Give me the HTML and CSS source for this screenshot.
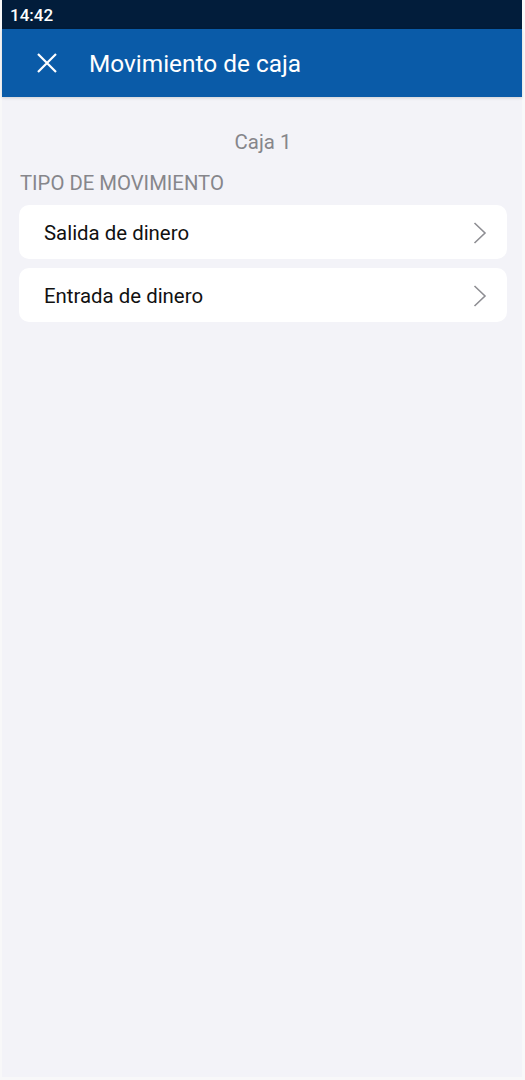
FILE: index.html
```html
<!DOCTYPE html>
<html lang="es">
<head>
  <meta charset="UTF-8">
  <title>Movimiento de caja</title>
  <link rel="stylesheet" href="styles.css">
</head>
<body>
  <div class="pantalla">
    <div class="status-bar">14:42</div>

    <header class="barra">
      <svg class="cerrar" width="20" height="20" viewBox="0 0 20 20">
        <path d="M1 1 L19 19 M19 1 L1 19" stroke="#fff" stroke-width="2.2" fill="none"/>
      </svg>
      <h1>Movimiento de caja</h1>
    </header>

    <main class="contenido">
      <div class="caja">Caja 1</div>
      <div class="seccion">TIPO DE MOVIMIENTO</div>

      <div class="lista">
        <div class="item">
          <span>Salida de dinero</span>
          <svg width="14" height="22" viewBox="0 0 14 22">
            <path d="M1.5 1 L12 11 L1.5 21" stroke="#8e8e93" stroke-width="1.6" fill="none"/>
          </svg>
        </div>
        <div class="item">
          <span>Entrada de dinero</span>
          <svg width="14" height="22" viewBox="0 0 14 22">
            <path d="M1.5 1 L12 11 L1.5 21" stroke="#8e8e93" stroke-width="1.6" fill="none"/>
          </svg>
        </div>
      </div>
    </main>
  </div>
</body>
</html>
```

FILE: styles.css
```css
html, body {
  height: 100%;
}

body {
  margin: 0;
  background-color: #f8f8f9;
  font-family: Roboto, "Noto Sans", Arial, sans-serif;
}

.pantalla {
  margin: 0 3px 0 2px;
  height: 1077px;
  background-color: #f3f3f8;
  display: flex;
  flex-direction: column;
}

.status-bar {
  height: 29px;
  background-color: #021d3b;
  color: white;
  font-size: 17px;
  font-weight: 500;
  line-height: 30px;
  padding-left: 8px;
}

.barra {
  height: 68px;
  background-color: #0a5ba8;
  display: flex;
  align-items: center;
  gap: 32px;
  padding-left: 35px;
  box-shadow: 0 1px 3px rgba(0,0,0,0.15);
}

.barra h1 {
  margin: 0;
  color: white;
  font-size: 24.4px;
  font-weight: 400;
}

.contenido {
  padding: 0 15px 0 17px;
}

.caja {
  text-align: center;
  color: #86868b;
  font-size: 20.4px;
  margin-top: 33px;
  line-height: 24px;
}

.seccion {
  color: #86868b;
  font-size: 20.3px;
  margin-top: 18px;
  padding-left: 1px;
  line-height: 22px;
}

.lista {
  margin-top: 11px;
  display: flex;
  flex-direction: column;
  gap: 9px;
}

.item {
  height: 54px;
  background: white;
  border-radius: 10px;
  display: flex;
  align-items: center;
  justify-content: space-between;
  padding: 0 20px 0 25px;
  font-size: 20.4px;
  line-height: 26px;
  padding-top: 1px;
  box-sizing: border-box;
  color: #111;
}
```
